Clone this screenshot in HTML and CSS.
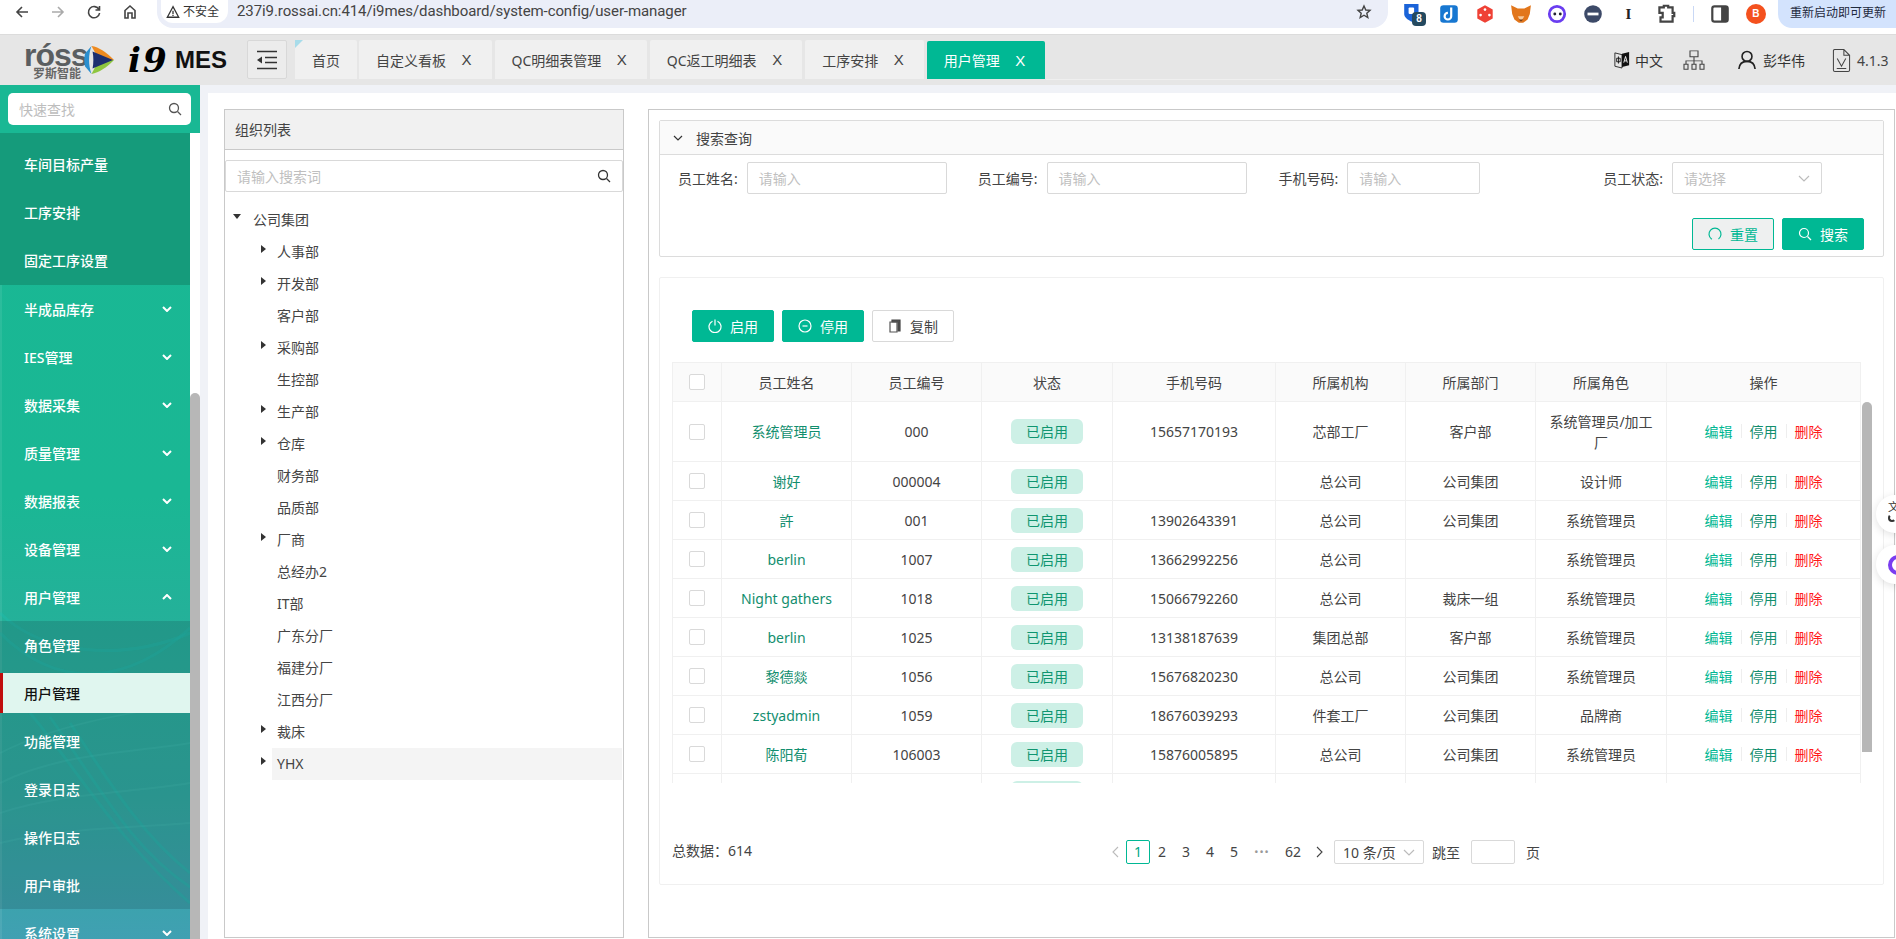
FILE: index.html
```html
<!DOCTYPE html>
<html lang="zh-CN">
<head>
<meta charset="utf-8">
<title>用户管理</title>
<link rel="stylesheet" href="styles.css">
</head>
<body>
<div class="app">
  <div class="chrome">
    <div class="nav-icons">
      <svg class="ci" viewBox="0 0 16 16"><path d="M14 8H3M8 3 3 8l5 5"/></svg>
      <svg class="ci dim" viewBox="0 0 16 16"><path d="M2 8h11M8 3l5 5-5 5"/></svg>
      <svg class="ci" viewBox="0 0 16 16"><path d="M13 5.5A5.6 5.6 0 1 0 13.6 9M13.5 2v4h-4"/></svg>
      <svg class="ci" viewBox="0 0 16 16"><path d="M3 14V6.5L8 2l5 4.500V14h-3V9H6v5z"/></svg>
    </div>
    <div class="omnibox">
      <span class="chip"><svg class="warn" viewBox="0 0 16 16"><path d="M8 2 1.500 14h13zM8 6.500v4M8 11.500v1.200"/></svg>不安全</span>
      <span class="url">237i9.rossai.cn:414/i9mes/dashboard/system-config/user-manager</span>
      <svg class="star" viewBox="0 0 16 16"><path d="m8 2 1.800 4 4.200.4-3.200 2.800 1 4.300L8 11.200l-3.800 2.300 1-4.300L2 6.400 6.200 6z"/></svg>
    </div>
    <div class="exts">
      <span class="ext"><svg viewBox="0 0 20 20"><path fill="#1a63d8" d="M2 1h13v9c0 3-3 5-6.500 7C5 15 2 13 2 10z"/><rect x="6" y="4" width="5" height="6" rx="1" fill="#fff"/></svg><b class="badge">8</b></span>
      <span class="ext"><svg viewBox="0 0 20 20"><rect x="2" y="2" width="16" height="16" rx="3" fill="#1777d1"/><path d="M12 4v8a3 3 0 1 1-3-3" fill="none" stroke="#fff" stroke-width="2"/></svg></span>
      <span class="ext"><svg viewBox="0 0 20 20"><path fill="#ef4135" d="m10 2 7 4v8l-7 4-7-4V6z"/><circle cx="10" cy="6" r="1.200" fill="#fff"/><circle cx="6" cy="11" r="1.200" fill="#fff"/><circle cx="14" cy="11" r="1.200" fill="#fff"/></svg></span>
      <span class="ext"><svg viewBox="0 0 20 20"><path fill="#e2761b" d="M1 2l6 3h6l6-3-1 8-2 5-4 3H8l-4-3-2-5z"/><path fill="#f6c99a" d="M7 12h6l-3 5z"/><path fill="#763d16" d="M8 15h4l-2 2z"/></svg></span>
      <span class="ext"><svg viewBox="0 0 20 20"><circle cx="10" cy="10" r="7" fill="#fff" stroke="#6a3df0" stroke-width="2.500"/><circle cx="8" cy="10" r="1.300" fill="#223"/><circle cx="13" cy="10" r="1.300" fill="#223"/></svg></span>
      <span class="ext"><svg viewBox="0 0 20 20"><circle cx="10" cy="10" r="8" fill="#3d4a68"/><path d="M5 10h10" stroke="#fff" stroke-width="2.500"/></svg></span>
      <span class="ext ext-i">I</span>
      <span class="ext"><svg viewBox="0 0 20 20"><path fill="none" stroke="#444" stroke-width="2" d="M4 4h4V2.500h4V4h4v5h1.500v3H16v5H5v-4h2V9H4z"/></svg></span>
      <i class="divider"></i>
      <span class="ext"><svg viewBox="0 0 20 20"><rect x="3" y="3" width="14" height="14" rx="2" fill="#fff" stroke="#444" stroke-width="2"/><rect x="11" y="3" width="6" height="14" fill="#444"/></svg></span>
      <span class="avatar">B</span>
    </div>
    <span class="update">重新启动即可更新</span>
  </div>

  <header class="topbar">
    <div class="logo">
      <div class="ross">
        <span class="ross-word">róss</span>
        <span class="ross-cn">罗斯智能</span>
      </div>
      <svg class="ross-mark" viewBox="0 0 28 28"><path fill="#2b8fcf" d="M7 1 1 8c-1 4-1 8 0 12l6 7c-3-8-3-18 0-26z"/><path fill="#ee8a1f" d="M7 1c7 1 14 6 21 13H14z"/><path fill="#8ec63f" d="M7 27c7-1 14-6 21-13H14z"/><path fill="#1d2f6f" d="M8 6l19 8-19 8c1-5 1-11 0-16z"/></svg>
      <span class="i9">i9</span>
      <span class="mes">MES</span>
    </div>
    <button class="collapse" type="button"><svg viewBox="0 0 22 20"><path d="M1 1.500h20M9 7.500h12M9 12.500h12M1 18.500h20"/><path class="fill" d="M1 10l5-3.500v7z"/></svg></button>
    <nav class="tabs">
      <a class="tab home">首页</a>
      <a class="tab">自定义看板<em>X</em></a>
      <a class="tab">QC明细表管理<em>X</em></a>
      <a class="tab">QC返工明细表<em>X</em></a>
      <a class="tab">工序安排<em>X</em></a>
      <a class="tab active">用户管理<em>X</em></a>
    </nav>
    <div class="top-tools">
      <span class="tool lang"><svg viewBox="0 0 18 22"><path d="M1 3l8 2v15l-8-2z" fill="none" stroke="#222"/><path d="M9 4l8-2v15l-8 2z" fill="#111"/><path d="M3 9h4v4H3zM5 7v8" fill="none" stroke="#111"/><path d="M11 14l2-7 2 7M11.800 12h2.400" fill="none" stroke="#fff"/></svg>中文</span>
      <span class="tool org"><svg viewBox="0 0 22 24" preserveAspectRatio="none"><path d="M7 1h8v7H7zM11 8v5M3 17v-4h16v4M11 13v4M1 17h4v6H1zM9 17h4v6H9zM17 17h4v6h-4z"/></svg></span>
      <span class="tool user"><svg viewBox="0 0 20 22"><circle cx="10" cy="7" r="5.500"/><path d="M1 21c.5-6 4-8.500 9-8.500s8.500 2.500 9 8.500"/></svg>彭华伟</span>
      <span class="tool ver"><svg viewBox="0 0 20 26"><path d="M1.500 2.500a1.500 1.500 0 0 1 1.500-1h9.500l6 6V23a1.500 1.500 0 0 1-1.500 1.500H3A1.500 1.500 0 0 1 1.500 23zM12.500 1.500v6h6M5.500 11l4.500 8 4.500-8M5 21.500h10"/></svg>4.1.3</span>
    </div>
  </header>

  <div class="body">
    <aside class="sidebar">
      <div class="side-search">
        <div class="side-input"><span>快速查找</span><svg class="mag" viewBox="0 0 14 14"><circle cx="6" cy="6" r="4.500"/><path d="m9.500 9.500 3.500 3.500"/></svg></div>
      </div>
      <div class="side-main">
        <nav class="menu">
          <svg class="swoosh" viewBox="0 0 190 806" preserveAspectRatio="none">
            <path d="M0 480c40 40 120 50 190 20"/><path d="M0 500c60 60 130 50 190-5"/>
            <path d="M30 580c50 60 90 130 160 190"/><path d="M50 584c50 70 80 130 140 170"/><path d="M70 590c40 60 70 110 120 150"/>
            <path class="thin" d="M0 620c60-30 130-40 190-50"/><path class="thin" d="M0 650c60-30 130-30 190-40"/><path class="thin" d="M0 680c60-20 130-20 190-30"/><path class="thin" d="M0 710c60-15 130-15 190-20"/>
          </svg>
          <div class="sub sub-top">
            <a class="mi">车间目标产量</a>
            <a class="mi">工序安排</a>
            <a class="mi">固定工序设置</a>
          </div>
          <a class="mi">半成品库存<svg class="chev" viewBox="0 0 10 6"><path d="m1 1 4 4 4-4"/></svg></a>
          <a class="mi">IES管理<svg class="chev" viewBox="0 0 10 6"><path d="m1 1 4 4 4-4"/></svg></a>
          <a class="mi">数据采集<svg class="chev" viewBox="0 0 10 6"><path d="m1 1 4 4 4-4"/></svg></a>
          <a class="mi">质量管理<svg class="chev" viewBox="0 0 10 6"><path d="m1 1 4 4 4-4"/></svg></a>
          <a class="mi">数据报表<svg class="chev" viewBox="0 0 10 6"><path d="m1 1 4 4 4-4"/></svg></a>
          <a class="mi">设备管理<svg class="chev" viewBox="0 0 10 6"><path d="m1 1 4 4 4-4"/></svg></a>
          <a class="mi">用户管理<svg class="chev" viewBox="0 0 10 6"><path d="m1 5 4-4 4 4"/></svg></a>
          <div class="sub">
            <a class="mi">角色管理</a>
            <a class="mi selected">用户管理</a>
            <a class="mi">功能管理</a>
            <a class="mi">登录日志</a>
            <a class="mi">操作日志</a>
            <a class="mi">用户审批</a>
          </div>
          <a class="mi">系统设置<svg class="chev" viewBox="0 0 10 6"><path d="m1 1 4 4 4-4"/></svg></a>
        </nav>
        <div class="side-scroll"><i></i></div>
      </div>
    </aside>

    <main class="main">
      <div class="page">
        <section class="org-panel">
          <div class="org-head">组织列表</div>
          <div class="org-search"><span>请输入搜索词</span><svg class="mag dark" viewBox="0 0 14 14"><circle cx="6" cy="6" r="4.500"/><path d="m9.500 9.500 3.500 3.500"/></svg></div>
          <ul class="tree">
            <li class="node root open">公司集团</li>
            <li class="node has">人事部</li>
            <li class="node has">开发部</li>
            <li class="node">客户部</li>
            <li class="node has">采购部</li>
            <li class="node">生控部</li>
            <li class="node has">生产部</li>
            <li class="node has">仓库</li>
            <li class="node">财务部</li>
            <li class="node">品质部</li>
            <li class="node has">厂商</li>
            <li class="node">总经办2</li>
            <li class="node">IT部</li>
            <li class="node">广东分厂</li>
            <li class="node">福建分厂</li>
            <li class="node">江西分厂</li>
            <li class="node has">裁床</li>
            <li class="node has hover">YHX</li>
          </ul>
        </section>

        <section class="user-panel">
          <div class="search-card">
            <div class="search-head"><svg class="down" viewBox="0 0 10 6"><path d="m1 1 4 4 4-4"/></svg>搜索查询</div>
            <div class="search-body">
              <div class="form-row">
                <label class="field f1">员工姓名:<span class="input w200">请输入</span></label>
                <label class="field f2">员工编号:<span class="input w200">请输入</span></label>
                <label class="field f3">手机号码:<span class="input w133">请输入</span></label>
                <label class="field f4">员工状态:<span class="input w150">请选择<svg class="sel" viewBox="0 0 12 7"><path d="m1 1 5 5 5-5"/></svg></span></label>
              </div>
              <div class="form-actions">
                <button class="btn ghost" type="button"><svg viewBox="0 0 14 14"><path d="M3.500 12A6 6 0 1 1 10.500 12M2.500 11.500l1.500.5"/></svg>重置</button>
                <button class="btn primary" type="button"><svg viewBox="0 0 14 14"><circle cx="6" cy="6" r="4.500"/><path d="m9.500 9.500 3.500 3.500"/></svg>搜索</button>
              </div>
            </div>
          </div>

          <div class="table-card">
            <div class="toolbar">
              <button class="btn primary" type="button"><svg viewBox="0 0 14 14"><path d="M4.500 2.200a6 6 0 1 0 5 0M7 .5v6"/></svg>启用</button>
              <button class="btn primary" type="button"><svg viewBox="0 0 14 14"><circle cx="7" cy="7" r="6"/><path d="M4.500 7h5"/></svg>停用</button>
              <button class="btn plain" type="button"><svg viewBox="0 0 14 14"><path d="M4 1h8v11h-2V3H4z" fill="#555"/><path d="M2 3h7v10H2z" fill="none" stroke="#555"/></svg>复制</button>
            </div>
            <div class="table-wrap">
              <div class="table-clip">
                <table class="grid">
                  <colgroup><col class="c0"><col class="c1"><col class="c1"><col class="c1b"><col class="c2"><col class="c1"><col class="c1"><col class="c1b"><col class="c3"></colgroup>
                  <thead>
                    <tr><th><i class="cb"></i></th><th>员工姓名</th><th>员工编号</th><th>状态</th><th>手机号码</th><th>所属机构</th><th>所属部门</th><th>所属角色</th><th>操作</th></tr>
                  </thead>
                  <tbody>
                    <tr class="tall"><td><i class="cb"></i></td><td class="lnk">系统管理员</td><td>000</td><td><span class="tag">已启用</span></td><td>15657170193</td><td>芯部工厂</td><td>客户部</td><td>系统管理员/加工厂</td><td><span class="ops"><a class="e">编辑</a><a class="s">停用</a><a class="d">删除</a></span></td></tr>
                    <tr><td><i class="cb"></i></td><td class="lnk">谢好</td><td>000004</td><td><span class="tag">已启用</span></td><td></td><td>总公司</td><td>公司集团</td><td>设计师</td><td><span class="ops"><a class="e">编辑</a><a class="s">停用</a><a class="d">删除</a></span></td></tr>
                    <tr><td><i class="cb"></i></td><td class="lnk">許</td><td>001</td><td><span class="tag">已启用</span></td><td>13902643391</td><td>总公司</td><td>公司集团</td><td>系统管理员</td><td><span class="ops"><a class="e">编辑</a><a class="s">停用</a><a class="d">删除</a></span></td></tr>
                    <tr><td><i class="cb"></i></td><td class="lnk">berlin</td><td>1007</td><td><span class="tag">已启用</span></td><td>13662992256</td><td>总公司</td><td></td><td>系统管理员</td><td><span class="ops"><a class="e">编辑</a><a class="s">停用</a><a class="d">删除</a></span></td></tr>
                    <tr><td><i class="cb"></i></td><td class="lnk">Night gathers</td><td>1018</td><td><span class="tag">已启用</span></td><td>15066792260</td><td>总公司</td><td>裁床一组</td><td>系统管理员</td><td><span class="ops"><a class="e">编辑</a><a class="s">停用</a><a class="d">删除</a></span></td></tr>
                    <tr><td><i class="cb"></i></td><td class="lnk">berlin</td><td>1025</td><td><span class="tag">已启用</span></td><td>13138187639</td><td>集团总部</td><td>客户部</td><td>系统管理员</td><td><span class="ops"><a class="e">编辑</a><a class="s">停用</a><a class="d">删除</a></span></td></tr>
                    <tr><td><i class="cb"></i></td><td class="lnk">黎德燚</td><td>1056</td><td><span class="tag">已启用</span></td><td>15676820230</td><td>总公司</td><td>公司集团</td><td>系统管理员</td><td><span class="ops"><a class="e">编辑</a><a class="s">停用</a><a class="d">删除</a></span></td></tr>
                    <tr><td><i class="cb"></i></td><td class="lnk">zstyadmin</td><td>1059</td><td><span class="tag">已启用</span></td><td>18676039293</td><td>件套工厂</td><td>公司集团</td><td>品牌商</td><td><span class="ops"><a class="e">编辑</a><a class="s">停用</a><a class="d">删除</a></span></td></tr>
                    <tr><td><i class="cb"></i></td><td class="lnk">陈阳荀</td><td>106003</td><td><span class="tag">已启用</span></td><td>15876005895</td><td>总公司</td><td>公司集团</td><td>系统管理员</td><td><span class="ops"><a class="e">编辑</a><a class="s">停用</a><a class="d">删除</a></span></td></tr>
                    <tr><td></td><td></td><td></td><td><span class="tag"></span></td><td></td><td></td><td></td><td></td><td></td></tr>
                  </tbody>
                </table>
              </div>
              <div class="table-scroll"><i></i></div>
            </div>
            <div class="pager-row">
              <span class="total">总数据：614</span>
              <div class="pager">
                <span class="pg arrow off"><svg viewBox="0 0 7 12"><path d="M6 1 1 6l5 5"/></svg></span>
                <span class="pg cur">1</span><span class="pg">2</span><span class="pg">3</span><span class="pg">4</span><span class="pg">5</span>
                <span class="pg more">•••</span><span class="pg wide">62</span>
                <span class="pg arrow"><svg viewBox="0 0 7 12"><path d="m1 1 5 5-5 5"/></svg></span>
                <span class="size">10 条/页<svg class="sel" viewBox="0 0 12 7"><path d="m1 1 5 5 5-5"/></svg></span>
                <span class="jump">跳至</span><span class="jump-input"></span><span class="jump-unit">页</span>
              </div>
            </div>
          </div>
        </section>
      </div>
    </main>
  </div>

  <div class="float f-a">文<i></i></div>
  <div class="float f-b"><i></i></div>
</div>
</body>
</html>
```
FILE: styles.css
```css
* { box-sizing: border-box; }
html, body { margin: 0; height: 100%; }
body {
  font-family: "Noto Sans", "Noto Sans CJK SC", sans-serif;
  font-size: 14px;
  color: #333;
  background: #fff;
  overflow: hidden;
}
a { text-decoration: none; color: inherit; }
button { font: inherit; }
ul { list-style: none; margin: 0; padding: 0; }

.app { position: relative; display: flex; flex-direction: column; height: 939px; overflow: hidden; }

/* browser chrome */
.chrome { flex: 0 0 35px; display: flex; align-items: flex-start; background: #fff; border-bottom: 1px solid #dcdcdc; }
.nav-icons { flex: 0 0 157px; display: flex; gap: 20px; padding: 4px 0 0 14px; }
.ci { width: 16px; height: 16px; fill: none; stroke: #444; stroke-width: 1.600; }
.ci.dim { stroke: #aaa; }
.omnibox { flex: 0 0 1231px; height: 28px; display: flex; align-items: flex-start; background: #ebeef8; border-radius: 0 0 16px 16px; padding-left: 4px; }
.chip { display: flex; align-items: center; gap: 3px; width: 67px; height: 23px; padding-left: 5px; background: #fff; border-radius: 0 0 12px 12px; font-size: 12px; line-height: 23px; color: #333; }
.warn { width: 14px; height: 14px; flex: none; fill: none; stroke: #333; stroke-width: 1.500; }
.url { flex: 1; margin-left: 9px; font-family: Roboto, sans-serif; font-size: 15px; line-height: 22px; color: #444; letter-spacing: -.09px; }
.star { width: 16px; height: 16px; margin: 4px 16px 0 0; fill: none; stroke: #444; stroke-width: 1.400; }
.exts { flex: 0 0 390px; width: 390px; display: flex; align-items: center; height: 28px; padding-left: 16px; margin-right: -22px; }
.ext { position: relative; flex: 0 0 36.100px; display: flex; align-items: center; justify-content: flex-start; height: 24px; }
.ext svg { width: 22px; height: 22px; margin-left: -2px; }
.ext-i { font: 700 15px "Liberation Serif", serif; color: #222; padding-left: 5px; }
.badge { position: absolute; left: 8px; top: 10px; width: 14px; height: 14px; border-radius: 4px; background: #24495f; color: #fff; font: 700 10px/14px "Liberation Sans", sans-serif; text-align: center; }
.divider { flex: 0 0 1px; height: 16px; background: #c9d8f5; margin-right: 17px; }
.avatar { flex: 0 0 20px; height: 20px; margin-left: -1px; border-radius: 50%; background: #f4511e; color: #fff; font: 700 10px/20px "Liberation Sans", sans-serif; text-align: center; }
.update { flex: none; position: absolute; right: 0; top: 0; width: 118px; height: 28px; padding-left: 12px; border-radius: 0 0 0 14px; background: #d3e3fd; font-size: 12px; line-height: 26px; color: #1f2a3d; white-space: nowrap; }

/* top bar */
.topbar { flex: 0 0 50px; display: flex; align-items: flex-start; background: #e6e6e6; position: relative; }
.topbar::after { content: ""; position: absolute; left: 1046px; top: 44px; width: 546px; height: 1px; background: #efefef; }
.logo { flex: 0 0 247px; height: 50px; display: flex; align-items: center; padding-left: 24px; }
.ross { flex: 0 0 59px; width: 59px; display: flex; flex-direction: column; align-items: flex-start; white-space: nowrap; }
.ross-word { font: 700 32px/26px "Liberation Sans", sans-serif; color: #5a5e61; letter-spacing: -1px; }
.ross-cn { font-size: 12px; line-height: 11px; font-weight: 700; color: #666; margin-left: 9px; }
.ross-mark { width: 32px; height: 30px; flex: none; }
.i9 { flex: 0 0 47px; font: italic 700 34px/40px "DejaVu Serif", serif; color: #000; margin-left: 13px; letter-spacing: 2px; }
.mes { font: 700 24px/30px "Liberation Sans", sans-serif; color: #111; }
.collapse { flex: 0 0 40px; width: 40px; height: 39px; margin-top: 5px; padding: 0; border: 1px solid #d8d8d8; border-radius: 2px; background: #ececec; display: flex; align-items: center; justify-content: center; }
.collapse svg { width: 22px; height: 20px; fill: none; stroke: #333; stroke-width: 1.600; }
.collapse .fill { fill: #333; stroke: none; }
.tabs { display: flex; gap: 3px; margin: 5px 0 0 8px; height: 39px; }
.tab { position: relative; display: flex; align-items: center; height: 39px; padding: 0 17px; background: #f0f0f0; border-radius: 2px 2px 0 0; color: #444; font-size: 14px; white-space: nowrap; }
.tab em { font-style: normal; font-family: "Liberation Sans", sans-serif; margin: 0 3px 0 15.500px; font-size: 15px; color: #444; }
.tab.home { margin-right: -1px; }
.tab.home::before { content: ""; position: absolute; left: 0; top: 0; border-style: solid; border-width: 8px 8px 0 0; border-color: #a8dcea transparent transparent transparent; }
.tab.active { background: #00b894; color: #fff; height: 38px; margin: 1px 0 0; }
.tab.active em { color: #fff; }
.top-tools { position: absolute; left: 1614px; top: 0; height: 50px; display: flex; align-items: center; font-size: 14px; color: #333; }
.tool { display: flex; align-items: center; white-space: nowrap; }
.lang { width: 69px; gap: 5px; }
.lang svg { width: 16px; height: 22px; }
.org { width: 55px; }
.org svg, .user svg, .ver svg { fill: none; stroke: #444; stroke-width: 1.100; }
.org svg { width: 22px; height: 20px; }
.user { width: 94px; gap: 7px; }
.user svg { width: 18px; height: 20px; stroke-width: 1.800; stroke: #222; }
.ver { gap: 6px; color: #444; }
.ver svg { width: 19px; height: 25px; }

/* layout */
.body { flex: 1; display: flex; min-height: 0; }
.sidebar { flex: 0 0 200px; display: flex; flex-direction: column; min-height: 0; }
.side-search { flex: 0 0 48px; background: #19b894; padding: 8px 9px 0 8px; }
.side-input { display: flex; align-items: center; justify-content: space-between; height: 32px; padding: 0 9px 0 11px; background: #fff; border-radius: 5px; color: #bdbdbd; font-size: 14px; }
.mag { width: 14px; height: 14px; fill: none; stroke: #555; stroke-width: 1.300; }
.mag.dark { stroke: #333; }
.side-main { flex: 1; display: flex; min-height: 0; }
.menu { position: relative; flex: 0 0 190px; overflow: hidden; background: linear-gradient(180deg, #19b894 0, #1ab794 45%, #25b09a 62%, #2faba0 82%, #40a0b2 100%); box-shadow: inset 2px 0 0 rgba(255,255,255,.08); }
.swoosh { position: absolute; left: 0; top: 0; width: 190px; height: 806px; fill: none; stroke: rgba(30,190,175,.4); stroke-width: 3; }
.swoosh .thin { stroke: rgba(90,210,200,.16); stroke-width: 2; }
.mi { position: relative; display: flex; align-items: center; justify-content: space-between; height: 48px; padding: 0 18px 0 24px; color: #fff; font-size: 14px; font-weight: 500; }
.sub { position: relative; background: rgba(25,60,70,.2); }
.sub-top { padding: 7px 0 1px; background: #159b7b; }
.mi.selected { height: 40px; margin: 4px 0; background: #e0f6ef; color: #111; border-left: 3px solid #c00d0d; padding-left: 21px; }
.chev { width: 10px; height: 6px; fill: none; stroke: #fff; stroke-width: 2; }
.side-scroll { flex: 0 0 10px; display: flex; flex-direction: column; padding-top: 260px; background: #fff; }
.side-scroll i { flex: 1; background: #b7b7b7; border-radius: 5px 5px 0 0; }

.main { flex: 1; min-width: 0; padding: 8px 0 0 8px; background: #f0f2f7; display: flex; }
.page { flex: 1; min-width: 0; display: flex; gap: 24px; padding: 16px 1px 1px 16px; background: #fff; }

/* org panel */
.org-panel { flex: 0 0 400px; border: 1px solid #c9c9c9; display: flex; flex-direction: column; }
.org-head { flex: 0 0 40px; padding-left: 10px; background: #f1f1f1; border-bottom: 1px solid #c9c9c9; line-height: 39px; font-size: 14px; color: #444; }
.org-search { display: flex; align-items: center; justify-content: space-between; height: 32px; margin: 10px 0 0; padding: 0 11px; border: 1px solid #d9d9d9; border-radius: 2px; color: #bfbfbf; }
.tree { padding: 12px 0 0; }
.node { position: relative; height: 32px; margin-left: 51px; padding-left: 1px; line-height: 32px; color: #444; }
.node.root { margin-left: 27px; }
.node.has::before, .node.open::before { content: ""; position: absolute; border-style: solid; }
.node.has::before { left: -15px; top: 9px; border-width: 4px 0 4px 5px; border-color: transparent transparent transparent #333; }
.node.open::before { left: -19px; top: 10px; border-width: 5px 4px 0 4px; border-color: #333 transparent transparent transparent; }
.node.hover { background: #f4f4f4; margin-left: 47px; padding-left: 5px; margin-right: 1px; }
.node.hover::before { left: -11px; }

/* right panel */
.user-panel { flex: 1; min-width: 0; border: 1px solid #c9c9c9; padding: 10px 10px 0; display: flex; flex-direction: column; gap: 20px; }
.search-card { flex: 0 0 137px; border: 1px solid #dcdcdc; border-radius: 2px; }
.search-head { display: flex; align-items: center; height: 34px; padding-left: 13px; background: #fafafa; border-bottom: 1px solid #dcdcdc; color: #444; }
.down { width: 10px; height: 6px; margin-right: 13px; fill: none; stroke: #333; stroke-width: 1.200; }
.search-body { padding: 7px 19px 0 18px; }
.form-row { display: flex; height: 32px; }
.field { display: flex; align-items: center; gap: 9px; color: #444; white-space: nowrap; }
.f2 { margin-left: 31px; }
.f3 { margin-left: 32px; }
.f4 { margin-left: 123px; }
.input { position: relative; display: flex; align-items: center; justify-content: space-between; height: 32px; padding: 0 11px; border: 1px solid #d9d9d9; border-radius: 2px; color: #bfbfbf; }
.w200 { width: 200px; }
.w133 { width: 133px; }
.w150 { width: 150px; }
.sel { width: 12px; height: 7px; fill: none; stroke: #bbb; stroke-width: 1.200; }
.form-actions { display: flex; justify-content: flex-end; gap: 8px; margin-top: 24px; }
.btn { display: flex; align-items: center; justify-content: center; gap: 8px; width: 82px; height: 32px; padding: 0; border: 1px solid #00b894; border-radius: 2px; background: #00b894; color: #fff; font-size: 14px; }
.btn svg { width: 14px; height: 14px; fill: none; stroke: currentColor; stroke-width: 1.200; }
.btn.ghost { background: #eef0f0; color: #00b894; }
.btn.plain { background: #fff; color: #444; border-color: #d9d9d9; }

.table-card { flex: 0 0 608px; border: 1px solid #f0f0f0; border-radius: 2px; padding: 32px 0 0 12px; display: flex; flex-direction: column; }
.toolbar { display: flex; gap: 8px; padding-left: 20px; }
.table-wrap { display: flex; margin-top: 20px; height: 421px; }
.table-clip { flex: 0 0 1190px; height: 421px; overflow: hidden; }
.grid { width: 1189px; table-layout: fixed; border-collapse: separate; border-spacing: 0; font-size: 14px; }
.c0 { width: 50px; } .c1 { width: 130px; } .c1b { width: 131px; } .c2 { width: 163px; } .c3 { width: 194px; }
.grid th, .grid td { padding: 0 12px; text-align: center; border-right: 1px solid #f0f0f0; border-bottom: 1px solid #f0f0f0; color: #444; font-weight: 400; line-height: 21px; }
.grid th:first-child, .grid td:first-child { border-left: 1px solid #f0f0f0; padding: 0; }
.grid th { height: 40px; background: #fafafa; border-top: 1px solid #f0f0f0; }
.grid td { height: 39px; }
.grid .tall td { height: 60px; }
.grid td.lnk { color: #128e6e; padding: 0 4px; }
.cb { display: block; width: 16px; height: 16px; margin: 0 auto; border: 1px solid #d9d9d9; border-radius: 2px; background: #fff; }
.tag { display: inline-block; width: 72px; height: 25px; vertical-align: middle; border-radius: 6px; background: #cdf0e6; color: #0f9570; line-height: 25px; }
.ops { display: flex; justify-content: center; }
.ops a { position: relative; padding: 0 8.500px; }
.ops a + a::before { content: ""; position: absolute; left: 0; top: 3px; width: 1px; height: 14px; background: #eee; }
.ops .e { color: #00b894; }
.ops .s { color: #128e6e; }
.ops .d { color: #ff1a1a; }
.table-scroll { flex: 0 0 10px; padding-top: 40px; }
.table-scroll i { display: block; width: 10px; height: 350px; background: #b7b7b7; border-radius: 5px 5px 0 0; }

.pager-row { display: flex; align-items: center; height: 24px; margin-top: 57px; color: #444; }
.total { flex: 0 0 432px; margin-top: -5px; }
.pager { display: flex; align-items: center; height: 24px; }
.pg { width: 24px; height: 24px; line-height: 24px; text-align: center; color: #444; }
.pg.cur { border: 1px solid #00b894; border-radius: 2px; line-height: 22px; color: #00a884; }
.pg.more { width: 32px; color: #999; font-size: 11px; letter-spacing: 1px; }
.pg.wide { width: 30px; }
.pg.arrow { display: flex; align-items: center; justify-content: center; width: 22px; }
.pg.arrow svg { width: 7px; height: 12px; fill: none; stroke: #444; stroke-width: 1.100; }
.pg.off svg { stroke: #bbb; }
.size { display: flex; align-items: center; justify-content: space-between; width: 90px; height: 24px; margin-left: 4px; padding: 0 8px; border: 1px solid #d9d9d9; border-radius: 2px; white-space: nowrap; }
.jump { margin-left: 8px; }
.jump-input { width: 44px; height: 24px; margin-left: 11px; border: 1px solid #d9d9d9; border-radius: 2px; }
.jump-unit { margin-left: 11px; }

.float { position: absolute; left: 1876px; width: 38px; height: 38px; border-radius: 50%; background: #fff; box-shadow: 0 2px 8px rgba(0,0,0,.12); }
.f-a { top: 495px; padding: 6px 0 0 12px; font-size: 11px; line-height: 12px; color: #333; }
.f-a i { display: block; width: 8px; height: 8px; margin-top: 1px; border: 2px solid #333; border-top-color: transparent; border-right-color: transparent; border-radius: 50%; }
.f-b { top: 545px; height: 39px; padding: 10px 0 0 12px; }
.f-b i { display: block; width: 20px; height: 20px; border-radius: 50%; border: 4px solid #7a3df0; background: #fff; }
```
